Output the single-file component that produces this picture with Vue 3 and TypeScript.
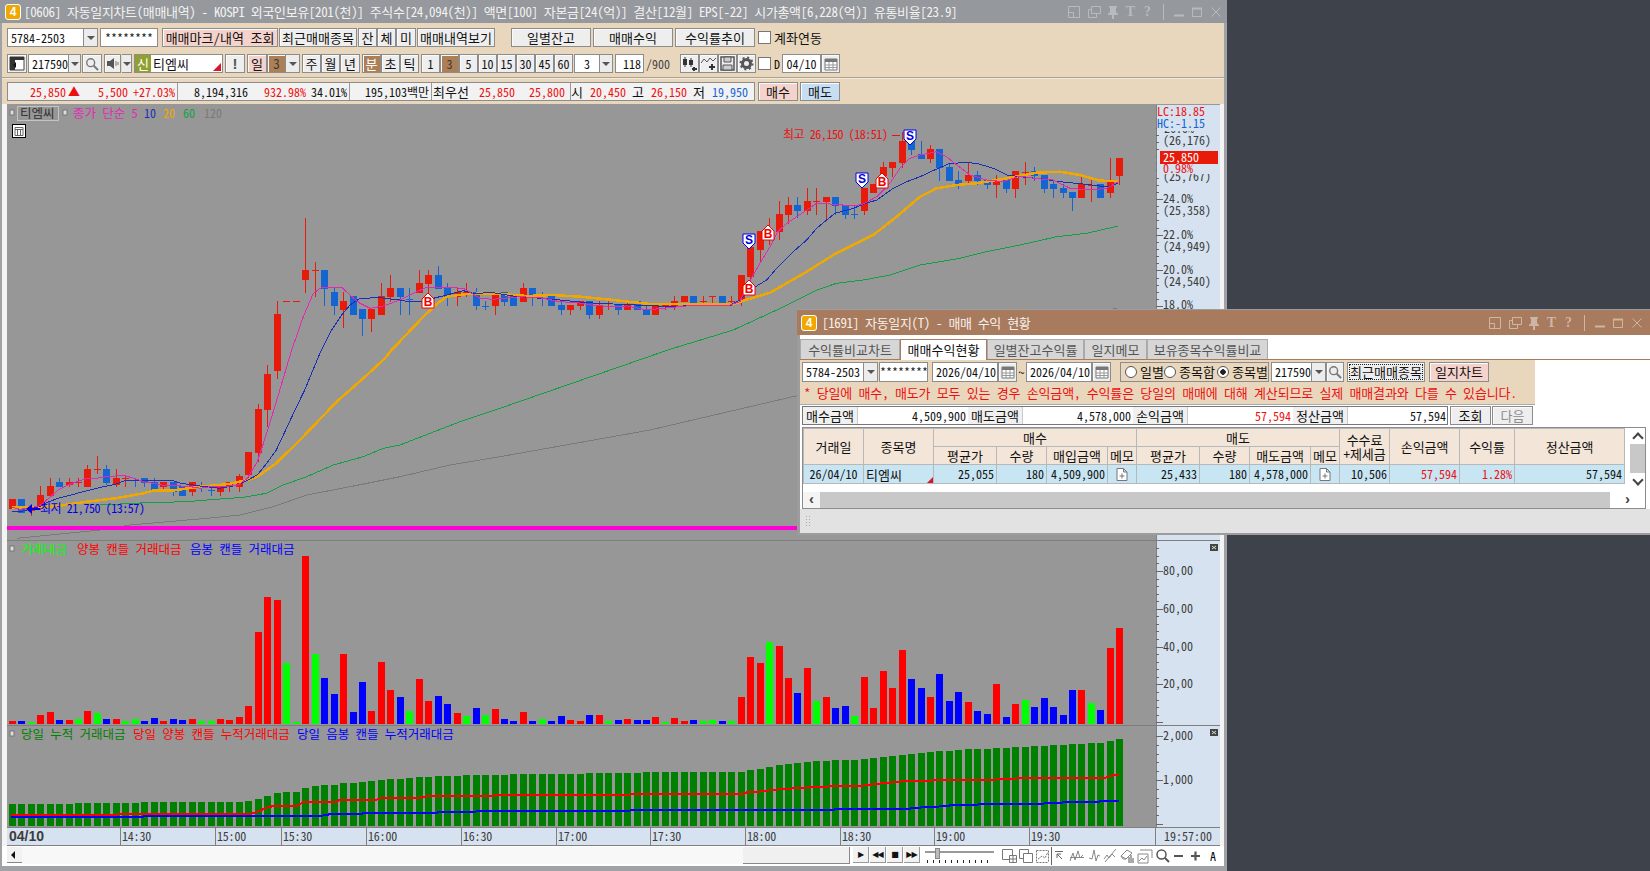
<template>
  <div class="desk">
    <svg class="defs" width="0" height="0">
      <symbol id="ic-win" viewBox="0 0 14 14"><path d="M1.5 1.5h11v11h-11zM1.5 7.5h5v5" fill="none" stroke="currentColor" /></symbol>
      <symbol id="ic-dup" viewBox="0 0 14 14"><path d="M4.5 1.5h9v7h-9zM4.5 4.5h-3v8h8v-4" fill="none" stroke="currentColor" /></symbol>
      <symbol id="ic-pin" viewBox="0 0 12 14"><path d="M2 1h8v1l-1 1v4l2 2v1H7v4H5v-4H1V9l2-2V3L2 2z" fill="currentColor" /></symbol>
      <symbol id="ic-cal" viewBox="0 0 14 14"><path d="M1 2h12v11H1z" fill="#fff" stroke="#777" /><path d="M1 2h12v3H1z" fill="#777" /><path d="M1 8h12M1 10.5h12M5 5v8M9 5v8" stroke="#999" fill="none" /></symbol>
      <symbol id="ic-search" viewBox="0 0 16 16"><circle cx="6.5" cy="6.5" r="4.5" fill="none" stroke="#777" stroke-width="1.6" /><path d="M10 10l5 5" stroke="#777" stroke-width="2.2" /></symbol>
      <symbol id="ic-memo" viewBox="0 0 12 13"><path d="M1 .5h6.5l3.5 3.5v8.500H1zM7.500.5V4H11M6 5.500v5M3.500 8h5" fill="#fff" stroke="#777" /></symbol>
    </svg>

    <!-- 자동일지차트 -->
    <section class="win main">
      <header class="titlebar">
        <span class="logo">4</span>
        <span class="title-text">[0606] 자동일지차트(매매내역) - KOSPI 외국인보유[201(천)] 주식수[24,094(천)] 액면[100] 자본금[24(억)] 결산[12월] EPS[-22] 시가총액[6,228(억)] 유통비율[23.9]</span>
        <div class="title-btns">
          <svg width="14" height="14"><use href="#ic-win" /></svg>
          <svg width="14" height="14"><use href="#ic-dup" /></svg>
          <svg width="12" height="14"><use href="#ic-pin" /></svg>
          <b class="glyph">T</b>
          <b class="glyph">?</b>
          <i class="bar"></i>
          <svg class="min" width="12" height="12"><path d="M1 9.500h10" stroke="currentColor" stroke-width="2" /></svg>
          <svg width="12" height="12"><path d="M1.500 2.500h9v8h-9z" fill="none" stroke="currentColor" /><path d="M1 2.500h10" stroke="currentColor" stroke-width="2" /></svg>
          <svg class="close" width="12" height="12"><path d="M1.500 1.500l9 9M10.500 1.500l-9 9" stroke="currentColor" /></svg>
        </div>
      </header>

      <div class="tools">
        <div class="row">
          <span class="field w77">5784-2503</span><span class="arrow w14"></span>
          <span class="field center w58 ml2">********</span>
          <button class="btn pink w116 ml4">매매마크/내역 조회</button>
          <button class="btn w78 ml1">최근매매종목</button>
          <button class="btn w19 ml1">잔</button>
          <button class="btn w19">체</button>
          <button class="btn w20">미</button>
          <button class="btn w78 ml1">매매내역보기</button>
          <button class="btn w80 ml16">일별잔고</button>
          <button class="btn w80 ml2">매매수익</button>
          <button class="btn w80 ml2">수익률추이</button>
          <span class="check ml3"></span><span class="lbl ml3">계좌연동</span>
        </div>
        <div class="row mt7">
          <button class="btn w20 ico">
            <svg width="16" height="15"><path d="M1 1h14v13H1z" fill="#fff" stroke="#444" /><path d="M1 1h14v3H1zM1 4h5v10H1z" fill="#333" /><path d="M4 9l3-3v6z" fill="#111" /></svg>
          </button>
          <span class="field w41 ml1">217590</span><span class="arrow w12"></span>
          <button class="btn w20 ml1 ico"><svg width="14" height="14"><use href="#ic-search" /></svg></button>
          <button class="btn w17 ml2 ico">
            <svg width="13" height="13"><path d="M1 4h3l4-3v11L4 9H1z" fill="#555" /><path d="M10 4v5M12 5v3" stroke="#777" /></svg>
          </button>
          <span class="arrow w10 ml1"></span>
          <span class="field code-name w89 ml2"><em>신</em>티엠씨<u></u></span>
          <button class="btn bang w20 ml2">!</button>
          <button class="btn pink w20 ml2">일</button>
          <button class="btn brown w19">3</button>
          <span class="arrow w14"></span>
          <button class="btn w19 ml2">주</button>
          <button class="btn w19">월</button>
          <button class="btn w20">년</button>
          <button class="btn brown light w19 ml2">분</button>
          <button class="btn w19">초</button>
          <button class="btn w19">틱</button>
          <button
            v-for="(m, i) in minutes"
            :key="m"
            class="btn num w19"
            :class="{ brown: m === '3', ml2: i === 0 }"
          >{{ m }}</button>
          <span class="field center w26 ml1">3</span><span class="arrow w13"></span>
          <span class="field right w29 ml2">118</span>
          <span class="lbl gray num ml2">/900</span>
          <button v-for="i in 4" :key="i" class="btn w19 ico" :class="{ ml10: i === 1 }">
            <svg v-if="i === 1" width="17" height="15"><path d="M4 1v10M10 2v9" stroke="#333" /><path d="M2 3h4v6H2zM8 4h4v5H8z" fill="#333" /><path d="M13 11v4M11 13h5" stroke="#333" stroke-width="2" /></svg>
            <svg v-else-if="i === 2" width="17" height="15"><path d="M1 7l3-4 3 3 3-4 3 3 3-3" stroke="#555" fill="none" /><path d="M12 8v6M9 11h6" stroke="#333" stroke-width="2" /></svg>
            <svg v-else-if="i === 3" width="15" height="15"><path d="M1 1h13v13H1z" fill="none" stroke="#555" stroke-width="1.500" /><path d="M4 1h7v5H4zM3 9h9v5H3z" fill="#ccc" stroke="#555" /></svg>
            <svg v-else width="15" height="15"><circle cx="7.500" cy="7.500" r="4" fill="none" stroke="#555" stroke-width="3" /><circle cx="7.500" cy="7.500" r="6" fill="none" stroke="#555" stroke-width="2" stroke-dasharray="2 2.700" /></svg>
          </button>
          <span class="check ml2"></span><span class="lbl num ml3">D</span>
          <span class="field center w39 ml2">04/10</span>
          <button class="btn w19 ico"><svg width="14" height="14"><use href="#ic-cal" /></svg></button>
        </div>
        <div class="divider"></div>
        <div class="row">
          <div class="quote">
            <span
              v-for="(q, i) in quote"
              :key="i"
              :class="[q.c, { sep: q.sep, ko: q.ko }]"
              :style="{ width: q.w + 'px' }"
            >{{ q.t }}</span>
          </div>
          <button class="btn pink w40 ml3">매수</button>
          <button class="btn sky w40 ml2">매도</button>
        </div>
      </div>

      <div class="chart">
        <svg class="plot" width="1213" height="742" viewBox="7 104 1213 742">
          <rect x="7" y="104" width="1213" height="742" fill="#979797" />
          <rect x="1156" y="105" width="64" height="723" fill="#d6e2f0" />
          <path d="M1156.500 105V828" stroke="#808080" />

          <!-- 가격 차트 -->
          <g shape-rendering="crispEdges">
            <g v-for="(c, i) in candles" :key="i" :stroke="candleColor(c)" :fill="candleColor(c)">
              <line :x1="cx(i) + 0.5" :x2="cx(i) + 0.5" :y1="c[2]" :y2="c[3]" />
              <rect :x="cx(i) - 3" :y="c[0]" width="7" :height="Math.max(c[1] - c[0], 1)" stroke="none" />
            </g>
            <polyline class="ma" :points="ma120" stroke="#7a7a7a" />
            <polyline class="ma" :points="ma60" stroke="#12a044" />
            <polyline class="ma" :points="ma20" stroke="#f0a800" stroke-width="2.500" />
            <polyline class="ma" :points="ma10" stroke="#1a30b4" />
            <polyline class="ma" :points="ma5" stroke="#e428b4" />
            <rect x="7" y="526" width="1149" height="4" fill="#ff00d8" />
            <path d="M7 540.500H1220M7 725.500H1220" stroke="#7e7e7e" fill="none" />
          </g>
          <g v-for="(m, i) in markers" :key="'m' + i">
            <polygon
              :points="m.k === 'B'
                ? `${m.x},${m.y - 8} ${m.x + 6},${m.y - 2} ${m.x + 6},${m.y + 7} ${m.x - 6},${m.y + 7} ${m.x - 6},${m.y - 2}`
                : `${m.x - 6},${m.y - 7} ${m.x + 6},${m.y - 7} ${m.x + 6},${m.y + 2} ${m.x},${m.y + 8} ${m.x - 6},${m.y + 2}`"
              fill="#fff"
              :stroke="m.k === 'B' ? '#ee0000' : '#0000e0'"
            />
            <text :x="m.x" :y="m.y + (m.k === 'B' ? 5 : 3)" class="mk" :fill="m.k === 'B' ? '#ee0000' : '#0000e0'">{{ m.k }}</text>
          </g>
          <text x="783" y="139" class="tight" fill="#ee1010">최고 26,150 (18:51)</text>
          <path d="M892 135.500h8" stroke="#ee1010" />
          <text x="40" y="513" class="tight" fill="#0000e0">최저 21,750 (13:57)</text>
          <path d="M26 509l6-5v4h8v2h-8v4z" fill="#0000e0" />

          <!-- 범례 -->
          <g class="legend">
            <rect x="10" y="110" width="4" height="5" fill="#ddd" stroke="#777" />
            <rect x="17.500" y="106.500" width="41" height="14" fill="none" stroke="#c4c4c4" />
            <text x="20" y="118" class="ko" fill="#2e2e2e">티엠씨</text>
            <rect x="63" y="110" width="4" height="5" fill="#ddd" stroke="#777" />
            <text x="73" y="118" class="ko" fill="#e428b4">종가 단순 5</text>
            <text x="144" y="118" fill="#1a30b4">10</text>
            <text x="163" y="118" fill="#f0a800">20</text>
            <text x="183" y="118" fill="#12a044">60</text>
            <text x="204" y="118" fill="#7a7a7a">120</text>
          </g>
          <g>
            <rect x="12.500" y="124.500" width="13" height="13" fill="#fff" stroke="#000" />
            <path d="M15 127.500h8v8h-8zM15 129.500h8M17.500 130v5M20.500 130v5" stroke="#666" fill="none" />
          </g>

          <!-- 가격 축 -->
          <g stroke="#666">
            <path v-for="t in priceTicks" :key="t.y" :d="`M1156 ${t.y}.500h${t.w}`" />
          </g>
          <text class="ax" x="1164" y="133">26.0%</text>
          <rect x="1157" y="105" width="63" height="26" fill="#d6e2f0" />
          <text x="1157" y="116" fill="#ee1010">LC:18.85</text>
          <text x="1157" y="128" fill="#1464d2">HC:-1.15</text>
          <text class="ax" x="1163" y="145">(26,176)</text>
          <text class="ax" x="1163" y="181">(25,767)</text>
          <rect x="1157" y="151" width="63" height="23" fill="#d6e2f0" />
          <rect x="1160" y="151" width="58" height="13" fill="#e81a0a" />
          <text x="1163" y="162" fill="#fff">25,850</text>
          <text x="1163" y="173" fill="#ee1010">0.98%</text>
          <g v-for="a in priceAxis" :key="a.t" class="ax">
            <text x="1163" :y="a.y">{{ a.t }}</text>
          </g>

          <!-- 거래대금 -->
          <g shape-rendering="crispEdges">
            <rect
              v-for="(b, i) in volume"
              :key="'v' + i"
              :x="cx(i) - 3"
              :y="b.top"
              width="7"
              :height="724 - b.top"
              :fill="b.color"
            />
          </g>
          <rect x="10" y="546" width="4" height="5" fill="#ddd" stroke="#777" />
          <text x="21" y="554" class="ko" fill="#00ff00">거래대금</text>
          <text x="77" y="554" class="ko" fill="#ff0000">양봉 캔들 거래대금</text>
          <text x="190" y="554" class="ko" fill="#0000ff">음봉 캔들 거래대금</text>
          <g stroke="#666">
            <path v-for="t in volTicks" :key="t.y" :d="`M1156 ${t.y}.500h${t.w}`" />
          </g>
          <g class="ax">
            <text x="1163" y="575">80,00</text>
            <text x="1163" y="613">60,00</text>
            <text x="1163" y="651">40,00</text>
            <text x="1163" y="688">20,00</text>
          </g>
          <rect x="1210" y="544" width="8" height="7" fill="#444" />
          <path d="M1212 546l4 3M1216 546l-4 3" stroke="#ddd" />

          <!-- 누적 거래대금 -->
          <g shape-rendering="crispEdges">
            <rect
              v-for="(top, i) in cumTops"
              :key="'c' + i"
              :x="cx(i) - 3"
              :y="top"
              width="7"
              :height="826 - top"
              fill="#008000"
            />
            <polyline class="ma" :points="cumRed" stroke="#ff0000" stroke-width="2" />
            <polyline class="ma" :points="cumBlue" stroke="#0000ff" stroke-width="2" />
          </g>
          <rect x="10" y="731" width="4" height="5" fill="#ddd" stroke="#777" />
          <text x="21" y="739" class="ko" fill="#008000">당일 누적 거래대금</text>
          <text x="133" y="739" class="ko" fill="#ff0000">당일 양봉 캔들 누적거래대금</text>
          <text x="297" y="739" class="ko" fill="#0000ff">당일 음봉 캔들 누적거래대금</text>
          <g stroke="#666">
            <path v-for="t in cumTicks" :key="t.y" :d="`M1156 ${t.y}.500h${t.w}`" />
          </g>
          <g class="ax">
            <text x="1163" y="740">2,000</text>
            <text x="1163" y="784">1,000</text>
          </g>
          <rect x="1210" y="729" width="8" height="7" fill="#444" />
          <path d="M1212 731l4 3M1216 731l-4 3" stroke="#ddd" />

          <!-- 시간 축 -->
          <rect x="7" y="828" width="1213" height="17" fill="#d6e2f0" />
          <path d="M7 827.500H1220M7 845.500H1220" stroke="#808080" />
          <text x="9" y="841" class="date">04/10</text>
          <g v-for="t in timeAxis" :key="t.t">
            <path :d="`M${t.x}.500 828v17`" stroke="#808080" />
            <text :x="t.x + 2" y="841" class="time" fill="#3c3c3c">{{ t.t }}</text>
          </g>
          <path d="M1155.500 828v17" stroke="#808080" />
          <text x="1164" y="841" fill="#3c3c3c">19:57:00</text>
        </svg>
      </div>

      <footer class="footer">
        <button class="scroll-left"><i></i></button>
        <div class="dither"></div>
        <div class="track"></div>
        <div class="play">
          <button class="pbtn">▶</button>
          <button class="pbtn">◀◀</button>
          <button class="pbtn">■</button>
          <button class="pbtn">▶▶</button>
        </div>
        <div class="slider">
          <i class="rail"></i><i class="knob"></i><i class="scale"></i>
        </div>
        <svg class="strip" width="215" height="18" viewBox="0 0 215 18">
          <g fill="none" stroke="#777">
            <path d="M.5 2.500h10v10H.5z" />
            <path d="M7.500 8.500h7v7h-7zM7.500 12h7M11 8.500v7" fill="#fff" />
            <path d="M17.500 2.500h9v9h-9z" />
            <path d="M21.500 6.500h9v9h-9z" fill="#fff" />
            <path d="M34.500 3.500h12M34.500 15.500h12M34.500 3.500v12M46.500 3.500v12M36 12l4-3 3 2 3-6" stroke-dasharray="2 1" />
          </g>
          <rect x="49" y="0" width="17" height="18" fill="#fff" />
          <path d="M49.500 0v18M53 4.500h8M55 7l5 5M55 7v4M55 7h4" fill="none" stroke="#666" />
          <g fill="none" stroke="#888">
            <path d="M68 14l3-8 2 7 3-9 2 7 3-3" />
            <path d="M68 10.500h14" />
            <path d="M87 11l3 1 2-9 2 11 2-6 2 1" />
            <path d="M102 12l3-4 2 3 3-4 3 3M103 15L114 2" />
            <path d="M119 9l6-6 5 3-6 6zM119 9l2 3h3" />
            <path d="M127 10v6M129 8v8M131 11v5" stroke="#555" />
            <path d="M138 3h12v8M136 7h10v9h-10zM137 14l3-3 2 2 3-4" />
            <circle cx="159.500" cy="7.500" r="4.500" stroke="#555" stroke-width="1.500" />
            <path d="M163 11l4 4" stroke="#555" stroke-width="2" />
          </g>
          <path d="M172 9h9M189 9h9M193.500 4.500v9" stroke="#555" stroke-width="2.200" fill="none" />
          <text x="208" y="14" class="big-a">A</text>
        </svg>
      </footer>
    </section>

    <!-- 자동일지 - 매매 수익 현황 -->
    <section class="win journal">
      <header class="titlebar brown-bar">
        <span class="logo">4</span>
        <span class="title-text">[1691] 자동일지(T) - 매매 수익 현황</span>
        <div class="title-btns">
          <svg width="14" height="14"><use href="#ic-win" /></svg>
          <svg width="14" height="14"><use href="#ic-dup" /></svg>
          <svg width="12" height="14"><use href="#ic-pin" /></svg>
          <b class="glyph">T</b>
          <b class="glyph">?</b>
          <i class="bar"></i>
          <svg class="min" width="12" height="12"><path d="M1 9.500h10" stroke="currentColor" stroke-width="2" /></svg>
          <svg width="12" height="12"><path d="M1.500 2.500h9v8h-9z" fill="none" stroke="currentColor" /><path d="M1 2.500h10" stroke="currentColor" stroke-width="2" /></svg>
          <svg class="close" width="12" height="12"><path d="M1.500 1.500l9 9M10.500 1.500l-9 9" stroke="currentColor" /></svg>
        </div>
      </header>
      <div class="journal-body">
        <nav class="tabs">
          <span class="tab w100">수익률비교차트</span>
          <span class="tab active w87">매매수익현황</span>
          <span class="tab w97">일별잔고수익률</span>
          <span class="tab w63">일지메모</span>
          <span class="tab w121">보유종목수익률비교</span>
        </nav>
        <div class="panel">
          <div class="row">
            <span class="field w62">5784-2503</span><span class="arrow w14"></span>
            <span class="field center clip w49 ml1">********</span>
            <span class="field w66 ml4">2026/04/10</span><button class="btn w19 ico"><svg width="14" height="14"><use href="#ic-cal" /></svg></button>
            <span class="tilde">~</span>
            <span class="field w66">2026/04/10</span><button class="btn w19 ico"><svg width="14" height="14"><use href="#ic-cal" /></svg></button>
            <div class="radios ml9">
              <span class="radio"></span><span class="rlabel w22">일별</span>
              <span class="radio"></span><span class="rlabel w36">종목합</span>
              <span class="radio on"></span><span class="rlabel">종목별</span>
            </div>
            <span class="field w41 ml2">217590</span><span class="arrow w14"></span>
            <button class="btn w18 ico"><svg width="14" height="14"><use href="#ic-search" /></svg></button>
            <button class="btn focus w78 ml3">최근매매종목</button>
            <button class="btn pink w60 ml4">일지차트</button>
          </div>
          <p class="note">* 당일에 매수, 매도가 모두 있는 경우 손익금액, 수익률은 당일의 매매에 대해 계산되므로 실제 매매결과와 다를 수 있습니다.</p>
        </div>
        <div class="summary">
          <div class="sum-box">
            <span class="sum-l">매수금액</span><span class="sum-v w110">4,509,900</span>
            <span class="sum-l">매도금액</span><span class="sum-v w110">4,578,000</span>
            <span class="sum-l">손익금액</span><span class="sum-v w105 red">57,594</span>
            <span class="sum-l">정산금액</span><span class="sum-v w100">57,594</span>
          </div>
          <button class="btn w41 ml2">조회</button>
          <button class="btn off w41 ml1">다음</button>
        </div>
        <div class="grid">
          <div class="grid-top">
            <table class="trade">
              <colgroup>
                <col v-for="w in colWidths" :key="w.k" :style="{ width: w.v + 'px' }" />
              </colgroup>
              <thead>
                <tr>
                  <th rowspan="2">거래일</th>
                  <th rowspan="2">종목명</th>
                  <th colspan="4">매수</th>
                  <th colspan="4">매도</th>
                  <th rowspan="2" class="two">수수료<br />+제세금</th>
                  <th rowspan="2">손익금액</th>
                  <th rowspan="2">수익률</th>
                  <th rowspan="2">정산금액</th>
                </tr>
                <tr>
                  <th>평균가</th><th>수량</th><th>매입금액</th><th>메모</th>
                  <th>평균가</th><th>수량</th><th>매도금액</th><th>메모</th>
                </tr>
              </thead>
              <tbody>
                <tr>
                  <td class="c">26/04/10</td>
                  <td class="l flag">티엠씨</td>
                  <td>25,055</td>
                  <td>180</td>
                  <td>4,509,900</td>
                  <td class="c"><svg width="12" height="13"><use href="#ic-memo" /></svg></td>
                  <td>25,433</td>
                  <td>180</td>
                  <td>4,578,000</td>
                  <td class="c"><svg width="12" height="13"><use href="#ic-memo" /></svg></td>
                  <td>10,506</td>
                  <td class="red">57,594</td>
                  <td class="red">1.28%</td>
                  <td>57,594</td>
                </tr>
              </tbody>
            </table>
            <div class="vscroll">
              <i class="up"></i><i class="thumb"></i><i class="down"></i>
            </div>
          </div>
          <div class="hscroll">
            <span class="end">‹</span>
            <span class="rail"></span>
            <span class="end wide">›</span>
          </div>
        </div>
        <div class="status"><i class="grip"></i></div>
      </div>
    </section>
  </div>
</template>

<script setup lang="ts">
type Candle = [number, number, number, number, 'r' | 'b']

// 본체 상단, 본체 하단, 꼬리 상단, 꼬리 하단, 색
const candles: Candle[] = [
  [499, 509, 499, 509, 'r'], [499, 513, 499, 513, 'b'], [510, 511, 505, 516, 'r'], [495, 508, 486, 510, 'r'],
  [486, 496, 478, 496, 'r'], [482, 487, 478, 487, 'b'], [482, 485, 478, 487, 'r'], [482, 483, 478, 487, 'r'],
  [469, 487, 465, 487, 'r'], [469, 470, 456, 474, 'r'], [469, 483, 465, 485, 'b'], [478, 485, 469, 487, 'r'],
  [478, 479, 475, 487, 'r'], [480, 481, 478, 487, 'b'], [478, 483, 478, 487, 'b'], [482, 492, 478, 492, 'b'],
  [482, 487, 482, 492, 'r'], [482, 492, 482, 496, 'b'], [486, 496, 486, 496, 'b'], [482, 492, 482, 496, 'r'],
  [486, 487, 482, 492, 'b'], [490, 491, 487, 496, 'b'], [486, 492, 486, 496, 'r'], [482, 487, 482, 492, 'r'],
  [476, 487, 474, 492, 'r'], [452, 475, 452, 478, 'r'], [409, 453, 404, 462, 'r'], [374, 410, 365, 427, 'r'],
  [314, 371, 301, 379, 'r'], [301, 302, 301, 302, 'r'], [301, 302, 301, 302, 'r'], [270, 280, 218, 293, 'r'],
  [270, 271, 262, 297, 'r'], [270, 289, 270, 306, 'b'], [292, 306, 288, 315, 'b'], [301, 310, 292, 328, 'r'],
  [296, 315, 296, 315, 'b'], [309, 319, 309, 336, 'b'], [309, 319, 309, 332, 'r'], [296, 315, 283, 315, 'r'],
  [288, 297, 275, 302, 'r'], [288, 297, 288, 315, 'b'], [299, 300, 288, 315, 'b'], [283, 293, 270, 293, 'r'],
  [275, 284, 270, 293, 'r'], [275, 289, 266, 289, 'b'], [288, 297, 283, 306, 'b'], [292, 297, 288, 306, 'r'],
  [292, 293, 283, 297, 'r'], [292, 306, 288, 310, 'b'], [306, 307, 301, 310, 'b'], [292, 306, 292, 315, 'r'],
  [292, 302, 292, 306, 'b'], [296, 306, 296, 306, 'b'], [288, 302, 283, 302, 'r'], [288, 297, 288, 306, 'b'],
  [296, 297, 292, 306, 'b'], [296, 306, 296, 306, 'b'], [305, 310, 300, 315, 'b'], [305, 310, 305, 315, 'r'],
  [301, 306, 301, 310, 'r'], [301, 315, 301, 319, 'b'], [305, 315, 301, 319, 'r'], [306, 307, 301, 310, 'r'],
  [305, 310, 305, 315, 'b'], [305, 310, 301, 310, 'r'], [301, 310, 301, 310, 'b'], [309, 315, 305, 315, 'b'],
  [305, 315, 305, 315, 'r'], [305, 306, 305, 310, 'r'], [301, 306, 296, 310, 'r'], [296, 302, 296, 302, 'r'],
  [296, 306, 296, 306, 'b'], [301, 302, 296, 306, 'r'], [296, 297, 296, 306, 'r'], [296, 306, 296, 306, 'b'],
  [301, 302, 296, 306, 'r'], [275, 302, 275, 306, 'r'], [247, 277, 240, 285, 'r'], [231, 250, 231, 263, 'r'],
  [231, 240, 218, 245, 'r'], [214, 232, 201, 240, 'r'], [205, 215, 197, 224, 'r'], [205, 211, 197, 218, 'b'],
  [201, 211, 188, 215, 'r'], [201, 202, 188, 215, 'r'], [197, 202, 197, 219, 'r'], [197, 206, 197, 215, 'b'],
  [205, 215, 205, 219, 'b'], [214, 215, 205, 219, 'b'], [188, 211, 188, 215, 'r'], [184, 193, 184, 193, 'r'],
  [167, 176, 162, 185, 'r'], [162, 168, 162, 177, 'r'], [141, 163, 132, 168, 'r'], [140, 150, 130, 155, 'b'],
  [154, 159, 141, 159, 'b'], [149, 159, 145, 163, 'r'], [149, 168, 149, 181, 'b'], [167, 181, 163, 181, 'b'],
  [180, 185, 171, 189, 'b'], [175, 181, 163, 185, 'r'], [175, 181, 171, 185, 'b'], [180, 185, 180, 189, 'b'],
  [180, 185, 175, 198, 'r'], [180, 189, 180, 193, 'b'], [171, 189, 171, 198, 'r'], [172, 173, 162, 185, 'r'],
  [171, 176, 167, 181, 'b'], [175, 189, 175, 193, 'b'], [184, 189, 180, 198, 'b'], [188, 193, 184, 198, 'b'],
  [192, 198, 192, 211, 'b'], [184, 198, 175, 198, 'r'], [185, 186, 180, 202, 'r'], [184, 198, 184, 198, 'b'],
  [180, 193, 158, 198, 'r'], [158, 176, 158, 185, 'r']
]

const cx = (i: number) => Math.round(11.7 + 9.467 * i)
const candleColor = (c: Candle) => (c[4] === 'r' ? '#e81a0a' : '#1464d2')

// 확대 캡처에서 읽은 좌표를 화면 좌표로 변환
const pts = (ox: number, oy: number, sx: number, raw: number[]) => {
  const out: string[] = []
  for (let i = 0; i < raw.length; i += 2) {
    out.push(`${(ox + raw[i] / sx).toFixed(1)},${(oy + raw[i + 1] / 3).toFixed(1)}`)
  }
  return out.join(' ')
}
const left = (raw: number[]) => pts(0, 100, 3, raw)
const mid = (raw: number[]) => pts(260, 230, 3, raw)
const right = (raw: number[]) => pts(720, 100, 3, raw)

const ma5 = [
  left([35,1222,62,1228,118,1218,146,1195,175,1170,203,1155,232,1145,260,1135,289,1135,317,1130,346,1128,374,1127,403,1135,431,1145,458,1150,487,1155,515,1155,544,1158,572,1160,601,1165,629,1160,658,1160,686,1158,715,1155,742,1135,772,1085,800,1000,829,905]),
  mid([95,360,130,260,160,190,185,172,245,172,270,195,300,220,330,235,370,228,420,210,470,185,500,172,560,172,610,175,660,205,700,208,780,200,840,203,900,215,950,218,1000,226,1050,230,1100,228,1160,240,1210,235,1300,226,1400,228]),
  right([60,605,88,545,120,490,150,440,173,395,200,370,230,350,260,330,290,310,345,313,400,318,430,312,470,290,510,250,540,205,570,175,600,165,650,155,680,170,710,195,750,225,800,240,850,245,900,228,950,236,1000,240,1050,265,1110,270,1160,265,1195,245])
].join(' ')

const ma10 = [
  left([35,1235,62,1235,118,1220,146,1205,175,1195,232,1180,289,1165,346,1153,374,1142,431,1141,515,1141,544,1150,601,1158,658,1165,715,1155,772,1125,800,1090,829,1050,857,990,885,930,914,870]),
  mid([184,360,215,300,245,255,270,225,300,205,360,203,420,210,445,215,480,215,520,205,560,195,610,182,640,190,700,188,760,198,900,210,980,218,1060,222,1150,226,1240,230,1300,226,1410,226]),
  right([60,600,90,570,140,540,170,505,220,455,260,420,290,385,320,360,345,340,400,325,430,313,470,300,520,265,560,245,600,230,650,207,690,190,740,188,770,190,820,205,860,225,900,230,960,236,1020,245,1090,252,1140,258,1170,258,1195,250])
].join(' ')

const ma20 = [
  left([35,1222,118,1222,175,1218,260,1205,346,1195,431,1180,458,1172,515,1172,601,1160,686,1152,742,1140,772,1130,829,1090,900,1020,1010,905,1090,835,1155,775]),
  mid([395,360,490,260,530,222,560,200,620,192,700,190,800,198,880,195,960,200,1060,210,1170,222,1300,222,1420,222]),
  right([60,605,150,578,260,515,340,465,400,435,460,405,530,350,600,290,650,265,710,255,770,250,860,235,950,218,1020,215,1080,225,1140,242,1195,243])
].join(' ')

const ma60 = [
  left([300,1215,440,1208,560,1205,620,1200,730,1192,800,1180,850,1155,920,1130,1000,1095,1090,1070,1150,1045,1200,1035,1290,1000,1380,965,1500,925]),
  mid([1230,358,1420,300]),
  right([170,630,230,600,290,570,350,550,430,540,510,525,600,495,720,475,800,455,900,435,1010,410,1100,400,1195,378])
].join(' ')

const ma120 = [
  left([50,1315,300,1290,390,1275,620,1255,720,1245,820,1220,920,1185,1050,1160,1200,1130,1350,1095,1500,1070]),
  '650,430 800,395 1117,308'
].join(' ')

const markers = [
  { k: 'B', x: 428, y: 301 },
  { k: 'B', x: 749, y: 288 },
  { k: 'S', x: 749, y: 241 },
  { k: 'B', x: 768, y: 233 },
  { k: 'S', x: 862, y: 180 },
  { k: 'B', x: 882, y: 181 },
  { k: 'S', x: 910, y: 137 }
]

const palette: Record<string, string> = { r: '#ff0000', b: '#0000ff', g: '#00ff00' }
const volume = (
  'r573 b573 g576 r555 r546 b570 r570 g567 r543 g549 b567 r567 g573 g567 b573 b564 r573 b567 b570 r567 ' +
  'g573 g573 r567 r570 r561 r528 r306 r201 r210 g399 g576 r78 g372 b444 b492 r372 b546 b456 r543 r396 ' +
  'r480 b501 g543 r447 r513 b498 b522 r549 g558 b534 g555 r537 b567 b573 r546 b573 g567 b573 b558 r570 ' +
  'r573 b555 r555 g573 b570 r567 b570 b570 r561 g576 r564 r573 b570 g573 g570 b573 g573 r501 r381 r399 ' +
  'g336 r348 r444 b489 r414 g513 r501 b534 b528 g558 r441 r534 r423 r474 r360 b447 b474 r501 b432 b513 ' +
  'b486 r516 b543 b552 r462 b561 r522 g510 b531 b504 b531 b555 b480 r480 g519 b540 r354 r294'
).split(' ').map((s) => ({ color: palette[s[0]], top: 530 + Number(s.slice(1)) / 3 }))

// 같은 높이가 이어지는 구간을 [개수, 높이]로 기록
const cumRuns: [number, number][] = [
  [7, 822], [7, 819], [11, 816], [1, 813], [1, 807], [1, 798], [1, 789], [2, 786], [1, 774], [1, 768], [2, 765],
  [2, 759], [1, 756], [1, 753], [1, 750], [2, 747], [1, 744], [2, 741], [3, 738], [5, 735], [8, 732], [6, 729],
  [11, 726], [1, 720], [1, 717], [1, 711], [1, 705], [1, 702], [1, 699], [1, 696], [2, 693], [3, 690], [1, 687],
  [1, 684], [1, 681], [1, 678], [1, 675], [1, 672], [1, 669], [1, 666], [2, 663], [1, 660], [3, 657], [2, 654],
  [2, 651], [2, 648], [2, 645], [2, 642], [2, 639], [1, 633], [1, 627]
]
const cumTops = cumRuns.flatMap(([n, top]) => Array<number>(n).fill(530 + top / 3))

const cumRed = [
  pts(0, 530, 2.8, [32,855,320,855,335,852,700,852,720,846,745,834,765,828,830,828,850,816,945,816,950,810,1050,810,1070,804,1170,804,1200,798,1380,798,1390,795,1568,795]),
  pts(700, 530, 2.958, [0,792,130,792,140,786,175,786,180,783,225,780,235,777,310,774,325,771,370,771,385,768,480,768,490,765,525,762,540,759,590,756,600,753,680,753,690,750,870,750,880,747,930,747,940,744,1195,744,1205,741,1225,735,1240,735])
].join(' ')

const cumBlue = [
  pts(0, 530, 2.8, [32,861,400,861,405,858,900,858,910,855,930,852,1010,852,1020,849,1220,849,1230,846,1330,846,1335,843,1568,843]),
  pts(700, 530, 2.958, [0,840,395,840,400,837,620,837,625,834,650,834,655,831,705,831,710,828,735,828,740,825,820,825,825,822,1015,822,1020,819,1070,819,1075,816,1180,816,1185,813,1240,813])
].join(' ')

const ticks = (start: number, step: number, from: number, to: number) => {
  const out: { y: number; w: number }[] = []
  for (let k = -20; k < 60; k++) {
    const y = Math.round(start + (step * k) / 5)
    if (y >= from && y <= to) out.push({ y, w: k % 5 === 0 ? 7 : 3 })
  }
  return out
}
const priceTicks = ticks(199, 35.7, 128, 310)
const volTicks = ticks(571, 37.8, 542, 724)
const cumTicks = ticks(736, 44, 728, 826)

const priceAxis = [
  { t: '24.0%', y: 203 },
  { t: '(25,358)', y: 215 },
  { t: '22.0%', y: 239 },
  { t: '(24,949)', y: 251 },
  { t: '20.0%', y: 274 },
  { t: '(24,540)', y: 286 },
  { t: '18.0%', y: 309 }
]

const timeAxis = [
  { t: '14:30', x: 120 },
  { t: '15:00', x: 215 },
  { t: '15:30', x: 281 },
  { t: '16:00', x: 366 },
  { t: '16:30', x: 461 },
  { t: '17:00', x: 556 },
  { t: '17:30', x: 650 },
  { t: '18:00', x: 745 },
  { t: '18:30', x: 840 },
  { t: '19:00', x: 934 },
  { t: '19:30', x: 1029 }
]

const minutes = ['1', '3', '5', '10', '15', '30', '45', '60']

const quote = [
  { t: '25,850', w: 58, c: 'up' },
  { t: '▲', w: 14, c: 'up' },
  { t: '5,500', w: 48, c: 'up' },
  { t: '+27.03%', w: 50, c: 'up', sep: true },
  { t: '8,194,316', w: 70 },
  { t: '932.98%', w: 58, c: 'up' },
  { t: '34.01%', w: 44, sep: true },
  { t: '195,103백만', w: 82, sep: true },
  { t: '최우선', w: 37, ko: true },
  { t: '25,850', w: 46, c: 'up' },
  { t: '25,800', w: 50, c: 'up' },
  { t: '', w: 6, sep: true },
  { t: '시', w: 12, ko: true },
  { t: '20,450', w: 43, c: 'up' },
  { t: '고', w: 18, ko: true },
  { t: '26,150', w: 43, c: 'up' },
  { t: '저', w: 18, ko: true },
  { t: '19,950', w: 43, c: 'down' }
]

const colWidths = [60, 70, 63, 50, 61, 29, 63, 50, 61, 29, 50, 70, 55, 110].map((v, k) => ({ k, v }))
</script>

<style>
html,
body {
  margin: 0;
  background: #3e434b;
}
</style>

<style scoped>
.desk {
  position: relative;
  width: 1650px;
  height: 871px;
  overflow: hidden;
  background: #3e434b;
  font: 12px/1 "Noto Sans Mono CJK KR", "Noto Sans CJK KR", sans-serif;
  color: #111;
}
.defs {
  position: absolute;
}
.win {
  box-sizing: border-box;
}
.main {
  width: 1227px;
  height: 871px;
  border: solid #a0a2a5;
  border-width: 0 3px 5px 2px;
  background: #e8d7bd;
}
button {
  font: inherit;
  padding: 0;
  margin: 0;
  color: inherit;
}
.titlebar {
  display: flex;
  align-items: center;
  height: 23px;
  margin-right: -3px;
  margin-left: -2px;
  background: #95989c;
  color: #f2f2f2;
  white-space: nowrap;
}
.logo {
  width: 14px;
  height: 14px;
  margin-left: 5px;
  border: 1px solid #fff;
  border-radius: 3px;
  background: #f0a800;
  color: #fff;
  font: bold 12px/14px "Liberation Sans", sans-serif;
  text-align: center;
}
.title-text {
  margin-left: 3px;
  font-size: 13px;
  letter-spacing: -0.35px;
}
.title-btns {
  display: flex;
  align-items: center;
  gap: 6px;
  margin-left: auto;
  padding-right: 5px;
  color: #b8bbbd;
}
.glyph {
  width: 11px;
  font: bold 14px/14px "Liberation Serif", serif;
  text-align: center;
}
.bar {
  width: 1px;
  height: 16px;
  margin: 0 3px 0 4px;
  background: currentColor;
}
.min {
  margin-right: 0;
}
.close {
  margin-left: 1px;
}

.tools {
  height: 81px;
  padding: 5px 0 0 5px;
  box-sizing: border-box;
}
.row {
  display: flex;
  align-items: center;
  height: 19px;
}
.mt7 {
  margin-top: 7px;
}
.divider {
  height: 1px;
  margin: 4px 0 4px -5px;
  background: #a9a396;
  box-shadow: 0 1px 0 #f3e9d8;
}
.field,
.btn,
.arrow {
  box-sizing: border-box;
  flex: none;
  height: 19px;
  border: 1px solid #8c8c8c;
  line-height: 17px;
  white-space: nowrap;
}
.field {
  padding-left: 3px;
  background: #fff;
}
.center {
  padding: 0;
  text-align: center;
}
.right {
  padding: 0 2px 0 0;
  text-align: right;
}
.clip {
  overflow: hidden;
}
.btn {
  background: #eeeeee;
  font-size: 13px;
  text-align: center;
  box-shadow: inset 1px 1px 0 #fafafa;
}
.btn.num {
  font-size: 12px;
}
.ico {
  display: flex;
  align-items: center;
  justify-content: center;
}
.pink {
  background: #f4d3cc;
}
.sky {
  background: #c6ddf2;
}
.brown {
  background: #ac7f57;
  color: #3a3a3a;
}
.light {
  color: #fff;
}
.off {
  color: #8c8c8c;
}
.focus {
  outline: 1px dotted #222;
  outline-offset: -3px;
}
.bang {
  font: bold 15px/17px "Liberation Sans", sans-serif;
  color: #555;
}
.arrow {
  position: relative;
  border-left: 0;
  background: #ececec;
}
.arrow::after {
  content: "";
  position: absolute;
  top: 7px;
  left: 50%;
  margin-left: -4px;
  border: 4px solid transparent;
  border-top: 4px solid #555;
  border-bottom: 0;
}
.check {
  box-sizing: border-box;
  flex: none;
  width: 13px;
  height: 13px;
  border: 1px solid #777;
  background: #fff;
}
.lbl {
  flex: none;
  font-size: 13px;
}
.lbl.num {
  font-size: 12px;
}
.gray {
  color: #444;
}
.code-name {
  position: relative;
  padding: 0;
  font-size: 13px;
}
.code-name em {
  display: inline-block;
  width: 16px;
  height: 17px;
  margin-right: 2px;
  background: #8fa030;
  color: #fff;
  font-style: normal;
  text-align: center;
}
.code-name u {
  position: absolute;
  right: 1px;
  bottom: 1px;
  border: 4px solid transparent;
  border-right-color: #d8152a;
  border-bottom-color: #d8152a;
}

.w10 { width: 10px; }
.w12 { width: 12px; }
.w13 { width: 13px; }
.w14 { width: 14px; }
.w17 { width: 17px; }
.w18 { width: 18px; }
.w19 { width: 19px; }
.w20 { width: 20px; }
.w22 { width: 22px; }
.w26 { width: 26px; }
.w29 { width: 29px; }
.w36 { width: 36px; }
.w39 { width: 39px; }
.w40 { width: 40px; }
.w41 { width: 41px; }
.w49 { width: 49px; }
.w58 { width: 58px; }
.w60 { width: 60px; }
.w62 { width: 62px; }
.w63 { width: 63px; }
.w66 { width: 66px; }
.w77 { width: 77px; }
.w78 { width: 78px; }
.w80 { width: 80px; }
.w87 { width: 87px; }
.w89 { width: 89px; }
.w97 { width: 97px; }
.w100 { width: 100px; }
.w105 { width: 105px; }
.w110 { width: 110px; }
.w116 { width: 116px; }
.w121 { width: 121px; }
.ml1 { margin-left: 1px; }
.ml2 { margin-left: 2px; }
.ml3 { margin-left: 3px; }
.ml4 { margin-left: 4px; }
.ml9 { margin-left: 9px; }
.ml10 { margin-left: 10px; }
.ml16 { margin-left: 16px; }

.quote {
  box-sizing: border-box;
  display: flex;
  width: 748px;
  height: 19px;
  border: 1px solid #8c8c8c;
  background: #f2f2f2;
}
.quote span {
  flex: none;
  box-sizing: border-box;
  height: 17px;
  line-height: 17px;
  text-align: right;
  white-space: nowrap;
}
.quote .ko {
  font-size: 13px;
}
.quote .sep {
  border-right: 1px solid #9a9a9a;
  padding-right: 2px;
}
.up {
  color: #ee1010;
}
.down {
  color: #1464d2;
}

.chart {
  height: 742px;
  padding: 0 4px 0 5px;
  background: #f4f4f4;
}
.plot {
  display: block;
}
.plot text {
  font: 12px "Noto Sans Mono CJK KR", "Noto Sans CJK KR", sans-serif;
}
.plot text.ko {
  font-size: 12.5px;
}
.plot text.tight {
  letter-spacing: -0.45px;
}
.plot text.time {
  letter-spacing: -0.2px;
}
.ma {
  fill: none;
}
.plot .mk {
  font: bold 12px "Liberation Sans", sans-serif;
  text-anchor: middle;
}
.ax text,
.plot text.ax {
  fill: #3c3c3c;
}
.plot .date {
  font: bold 14px "Liberation Sans", sans-serif;
  fill: #3c3c3c;
}
.plot .big-a {
  font: bold 14px "Liberation Sans", sans-serif;
  fill: #555;
  text-anchor: middle;
}

.footer {
  display: flex;
  align-items: flex-start;
  height: 20px;
  padding: 1px 0 0 5px;
  box-sizing: border-box;
  background: #fff;
}
.scroll-left {
  position: relative;
  flex: none;
  width: 15px;
  height: 16px;
  border: 0;
  border-bottom: 1px solid #888;
  background: #f2f2f2;
}
.scroll-left i {
  position: absolute;
  top: 4px;
  left: 4px;
  border: 4px solid transparent;
  border-right: 4px solid #111;
  border-left: 0;
}
.dither {
  flex: none;
  width: 721px;
  height: 17px;
  background: #f8f8f8;
}
.track {
  flex: none;
  box-sizing: border-box;
  width: 107px;
  height: 17px;
  border-right: 1px solid #888;
  border-bottom: 1px solid #888;
  background: #f0f0f0;
}
.play {
  display: flex;
  flex: none;
  gap: 1px;
  width: 67px;
  margin-left: 3px;
}
.pbtn {
  box-sizing: border-box;
  width: 16px;
  height: 16px;
  border: 0;
  border-right: 1px solid #999;
  border-bottom: 1px solid #999;
  background: #f2f2f2;
  font: 8px/15px "DejaVu Sans", sans-serif;
  letter-spacing: -1px;
  color: #111;
}
.slider {
  position: relative;
  flex: none;
  width: 69px;
  height: 18px;
  margin: 0 8px 0 5px;
}
.slider i {
  position: absolute;
}
.slider .rail {
  top: 4px;
  left: 0;
  width: 69px;
  height: 2px;
  background: #999;
}
.slider .knob {
  top: 1px;
  left: 10px;
  width: 3px;
  height: 9px;
  background: #bbb;
  border: 1px solid #888;
}
.slider .scale {
  top: 13px;
  left: 2px;
  width: 66px;
  height: 3px;
  background: repeating-linear-gradient(90deg, #222 0 1px, transparent 1px 6px);
}
.strip {
  flex: none;
}

.journal {
  position: absolute;
  top: 309px;
  left: 797px;
  width: 853px;
  height: 226px;
  border: solid #9c9c9c;
  border-width: 1px 0 3px 3px;
  background: #fff;
}
.brown-bar {
  height: 25px;
  margin: 0 0 0 -3px;
  background: #a87a5e;
  color: #f6f0ea;
}
.brown-bar .logo {
  margin-left: 4px;
}
.brown-bar .title-text {
  margin-left: 5px;
}
.brown-bar .title-btns {
  padding-right: 7px;
  color: #cfb5a3;
}
.journal-body {
  height: 197px;
  background: #fff;
}
.tabs {
  display: flex;
  box-sizing: border-box;
  height: 25px;
  padding-top: 4px;
  border-bottom: 1px solid #a87a5e;
}
.tab {
  box-sizing: border-box;
  height: 20px;
  border: 1px solid #aaa;
  border-bottom: 0;
  background: #d6d6d6;
  color: #555;
  font-size: 13px;
  line-height: 19px;
  text-align: center;
}
.tab.active {
  height: 21px;
  border-color: #a87a5e;
  background: #fff;
  color: #111;
}
.panel {
  box-sizing: border-box;
  width: 735px;
  height: 45px;
  padding: 2px 0 0 2px;
  border-bottom: 1px solid #aaa;
  background: #e8d7bd;
}
.panel .row .field,
.panel .row .btn,
.panel .row .arrow {
  height: 20px;
  line-height: 18px;
}
.tilde {
  flex: none;
  width: 9px;
  text-align: center;
}
.radios {
  box-sizing: border-box;
  display: flex;
  align-items: center;
  width: 149px;
  height: 20px;
  padding-left: 4px;
  border: 1px solid #8c8c8c;
}
.radio {
  box-sizing: border-box;
  flex: none;
  width: 12px;
  height: 12px;
  border: 1px solid #555;
  border-radius: 50%;
  background: #fff;
}
.radio.on {
  background: radial-gradient(circle, #222 0 2.500px, #fff 3px);
}
.rlabel {
  flex: none;
  margin: 0 2px 0 3px;
  font-size: 13px;
  white-space: nowrap;
}
.note {
  margin: 5px 0 0 2px;
  color: #ee1010;
  font-size: 13px;
  letter-spacing: -0.14px;
  white-space: nowrap;
}
.summary {
  display: flex;
  height: 19px;
  margin: 1px 0 0 2px;
}
.sum-box {
  box-sizing: border-box;
  display: flex;
  width: 646px;
  border: 1px solid #777;
}
.sum-l {
  flex: none;
  box-sizing: border-box;
  width: 55px;
  background: #f0f0f0;
  border-right: 1px solid #ccc;
  font-size: 13px;
  line-height: 17px;
  text-align: center;
}
.sum-v {
  flex: none;
  box-sizing: border-box;
  padding-right: 2px;
  line-height: 17px;
  text-align: right;
}
.red {
  color: #ee1010;
}
.grid {
  box-sizing: border-box;
  width: 844px;
  height: 82px;
  margin: 2px 0 0 2px;
  border: 1px solid #8c8c8c;
}
.grid-top {
  display: flex;
  height: 64px;
}
.trade {
  flex: none;
  width: 821px;
  height: 56px;
  border-collapse: collapse;
  table-layout: fixed;
}
.trade th,
.trade td {
  box-sizing: border-box;
  height: 18px;
  padding: 0;
  border: 1px solid #b8b8b8;
  font-weight: 400;
  white-space: nowrap;
}
.trade th {
  background: #f3e6d9;
  font-size: 13px;
  text-align: center;
}
.trade th.two {
  line-height: 14px;
}
.trade td {
  height: 19px;
  padding-right: 2px;
  background: #c7e5f2;
  text-align: right;
}
.trade td.red {
  color: #ee1010;
}
.trade td.c {
  padding: 0;
  text-align: center;
}
.trade td.c svg {
  display: block;
  margin: 0 auto;
}
.trade td.l {
  padding-left: 2px;
  font-size: 13px;
  text-align: left;
}
.flag {
  position: relative;
}
.flag::after {
  content: "";
  position: absolute;
  right: 0;
  bottom: 0;
  border: 3px solid transparent;
  border-right-color: #d8152a;
  border-bottom-color: #d8152a;
}
.vscroll {
  display: flex;
  flex-direction: column;
  flex: none;
  align-items: center;
  width: 15px;
  height: 64px;
  margin-left: 5px;
}
.vscroll i {
  display: block;
}
.vscroll .up {
  width: 6px;
  height: 6px;
  margin-top: 6px;
  border-top: 2px solid #444;
  border-left: 2px solid #444;
  transform: rotate(45deg);
}
.vscroll .thumb {
  width: 15px;
  height: 29px;
  margin-top: 2px;
  background: #c8c8c8;
}
.vscroll .down {
  width: 6px;
  height: 6px;
  margin-top: 3px;
  border-right: 2px solid #444;
  border-bottom: 2px solid #444;
  transform: rotate(45deg);
}
.hscroll {
  display: flex;
  height: 16px;
  font: bold 15px/14px "Liberation Sans", sans-serif;
  color: #444;
}
.hscroll .end {
  flex: none;
  width: 17px;
  background: #f4f4f4;
  text-align: center;
}
.hscroll .end.wide {
  width: 35px;
  background: #fff;
  padding-left: 0;
}
.hscroll .rail {
  flex: 1;
  background: #c8c8c8;
}
.status {
  position: relative;
  height: 24px;
  background: #e2e2e2;
}
.grip {
  position: absolute;
  top: 6px;
  left: 5px;
  width: 6px;
  height: 11px;
  background: radial-gradient(circle, #aaa 0 1px, transparent 1px) 0 0 / 3px 3px;
}
</style>
